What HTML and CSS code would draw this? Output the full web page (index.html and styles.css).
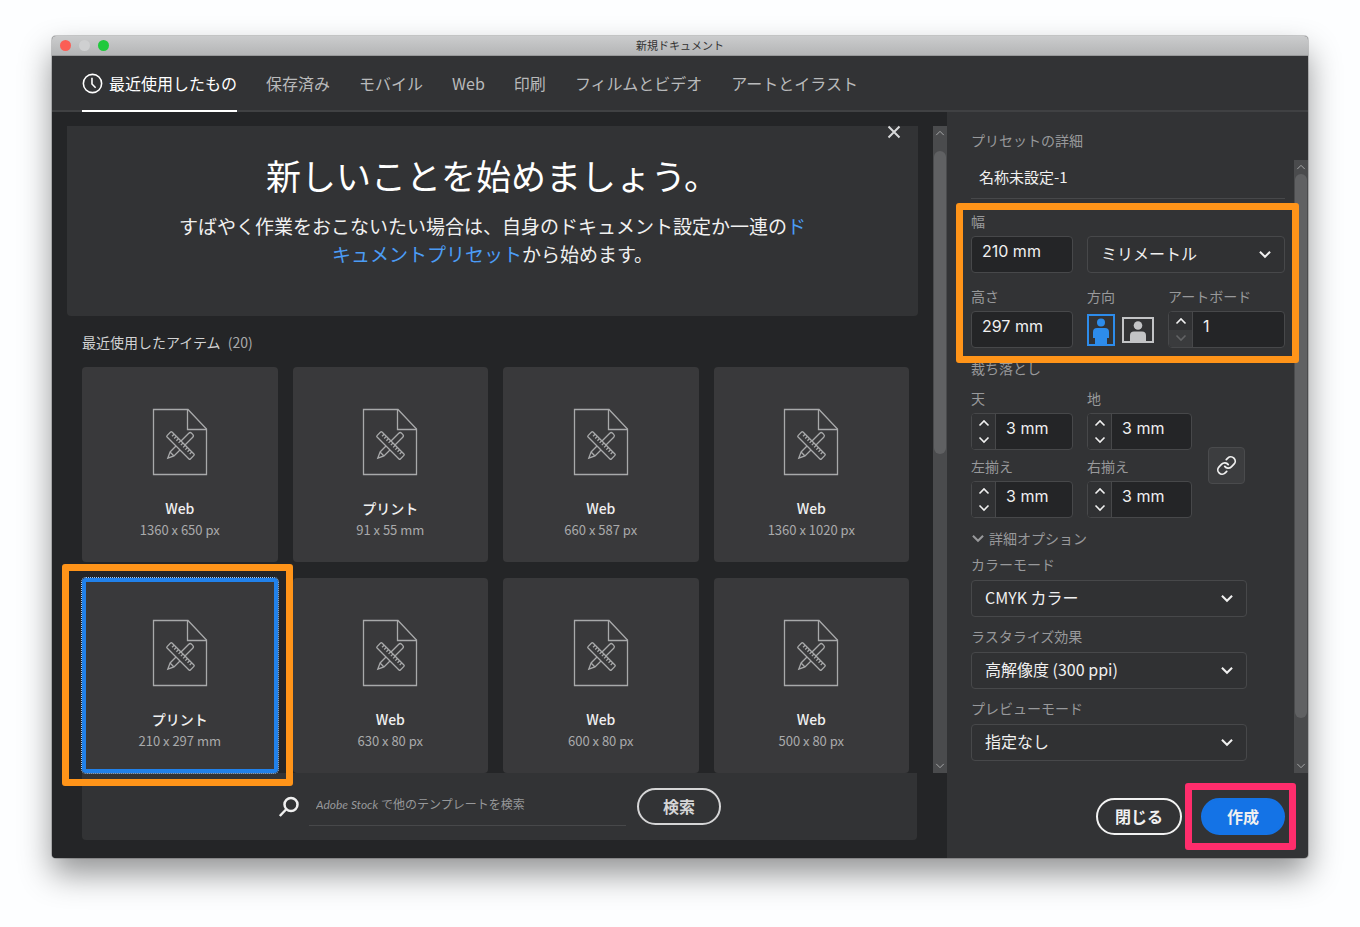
FILE: index.html
```html
<!DOCTYPE html>
<html lang="ja">
<head>
<meta charset="utf-8">
<meta name="viewport" content="width=device-width, initial-scale=1">
<title>新規ドキュメント</title>
<link rel="stylesheet" href="styles.css">
</head>
<body>
<svg class="defs" aria-hidden="true">
  <symbol id="doc" viewBox="0 0 56 68">
    <path d="M1.500 1.500H36L54.500 21V66.500H1.500Z"/>
    <path d="M35.500 1.500V21.500H54.500"/>
    <g transform="translate(28.500 37.500) rotate(-45)">
      <path d="M-12 -2.800H14.500a2 2 0 0 1 2 2v1.600a2 2 0 0 1 -2 2H-12L-18 0ZM-12 -2.800V2.800"/>
    </g>
    <g transform="translate(28.500 37.500) rotate(45)">
      <rect class="ruler" x="-16.500" y="-3.500" width="33" height="7" rx="1"/>
      <path d="M-12.500 -3.500v3M-9.400 -3.500v3M-6.300 -3.500v3M-3.200 -3.500v3M0 -3.500v3M3.200 -3.500v3M6.300 -3.500v3M9.400 -3.500v3M12.500 -3.500v3"/>
    </g>
  </symbol>
  <symbol id="down" viewBox="0 0 12 8"><path d="M1.500 1.500L6 6L10.500 1.500"/></symbol>
  <symbol id="up" viewBox="0 0 12 8"><path d="M1.500 6.500L6 2L10.500 6.500"/></symbol>
</svg>

<div class="window">
  <header class="titlebar">
    <div class="lights"><i class="light red"></i><i class="light gray"></i><i class="light green"></i></div>
    <h1 class="window-title">新規ドキュメント</h1>
    <div class="lights-spacer"></div>
  </header>

  <nav class="tabs">
    <a class="tab active" href="#recent"><svg class="clock" viewBox="0 0 20 20" aria-hidden="true"><circle cx="10" cy="10" r="8.700"/><path d="M9.500 4.500V10.500L13 14"/></svg>最近使用したもの</a>
    <a class="tab" href="#saved">保存済み</a>
    <a class="tab" href="#mobile">モバイル</a>
    <a class="tab" href="#web">Web</a>
    <a class="tab" href="#print">印刷</a>
    <a class="tab" href="#film">フィルムとビデオ</a>
    <a class="tab" href="#art">アートとイラスト</a>
  </nav>

  <div class="body">
    <main class="browser">
      <div class="scroller">
        <div class="content">
          <section class="banner">
            <button class="close" aria-label="閉じる"><svg viewBox="0 0 14 14"><path d="M1.500 1.500L12.500 12.500M12.500 1.500L1.500 12.500"/></svg></button>
            <h2 class="banner-title">新しいことを始めましょう。</h2>
            <p class="banner-text">すばやく作業をおこないたい場合は、自身のドキュメント設定か一連の<a href="#presets">ドキュメントプリセット</a>から始めます。</p>
          </section>
          <section class="recent">
            <h3 class="recent-title">最近使用したアイテム <span class="count">(20)</span></h3>
            <div class="cards">
              <button class="card"><svg class="doc"><use href="#doc"/></svg><span class="name">Web</span><span class="size">1360 x 650 px</span></button>
              <button class="card"><svg class="doc"><use href="#doc"/></svg><span class="name">プリント</span><span class="size">91 x 55 mm</span></button>
              <button class="card"><svg class="doc"><use href="#doc"/></svg><span class="name">Web</span><span class="size">660 x 587 px</span></button>
              <button class="card"><svg class="doc"><use href="#doc"/></svg><span class="name">Web</span><span class="size">1360 x 1020 px</span></button>
              <div class="marked">
                <button class="card selected"><svg class="doc"><use href="#doc"/></svg><span class="name">プリント</span><span class="size">210 x 297 mm</span></button>
                <span class="mark mark-card"></span>
              </div>
              <button class="card"><svg class="doc"><use href="#doc"/></svg><span class="name">Web</span><span class="size">630 x 80 px</span></button>
              <button class="card"><svg class="doc"><use href="#doc"/></svg><span class="name">Web</span><span class="size">600 x 80 px</span></button>
              <button class="card"><svg class="doc"><use href="#doc"/></svg><span class="name">Web</span><span class="size">500 x 80 px</span></button>
            </div>
          </section>
        </div>
        <div class="scrollbar" aria-hidden="true">
          <svg class="arrow"><use href="#up"/></svg>
          <div class="rail"><div class="thumb thumb-half"></div></div>
          <svg class="arrow"><use href="#down"/></svg>
        </div>
      </div>
      <form class="search">
        <svg class="lens" viewBox="0 0 22 22" aria-hidden="true"><circle cx="13" cy="8.500" r="6.500"/><path d="M8 13.500L1.800 20"/></svg>
        <input class="search-input" type="text" aria-label="テンプレートを検索" placeholder="Adobe Stock で他のテンプレートを検索">
        <button class="pill search-button" type="button">検索</button>
      </form>
    </main>

    <aside class="panel">
      <h2 class="label panel-title">プリセットの詳細</h2>
      <div class="scroller">
        <form class="details">
          <input class="doc-name" type="text" value="名称未設定-1" aria-label="名称">

          <div class="dimensions">
            <label class="label" for="width">幅</label>
            <div class="row">
              <input class="box col-a" id="width" type="text" value="210 mm">
              <div class="select grow"><select aria-label="単位"><option>ミリメートル</option></select><svg><use href="#down"/></svg></div>
            </div>
            <div class="row second">
              <div class="col-a">
                <label class="label" for="height">高さ</label>
                <input class="box" id="height" type="text" value="297 mm">
              </div>
              <div class="orientation">
                <span class="label">方向</span>
                <div class="orients">
                  <button class="orient on" type="button" aria-label="縦向き"><svg width="28" height="32" viewBox="0 0 28 32"><rect class="frame" x="1" y="1" width="26" height="30"/><circle cx="14" cy="8.500" r="4"/><path d="M10 14h8a4 4 0 0 1 4 4v6h-2v7H8v-7H6v-6a4 4 0 0 1 4-4Z"/></svg></button>
                  <button class="orient" type="button" aria-label="横向き"><svg width="32" height="26" viewBox="0 0 32 26"><rect class="frame" x="1" y="1" width="30" height="24"/><circle cx="16" cy="8.500" r="4.300"/><path d="M12 14.500h8a4 4 0 0 1 4 4V25H8v-6.500a4 4 0 0 1 4-4Z"/></svg></button>
                </div>
              </div>
              <div class="grow">
                <label class="label" for="artboards">アートボード</label>
                <div class="stepper">
                  <div class="steps"><button type="button" aria-label="増やす"><svg><use href="#up"/></svg></button><button type="button" class="off" disabled aria-label="減らす"><svg><use href="#down"/></svg></button></div>
                  <input id="artboards" type="text" value="1">
                </div>
              </div>
            </div>
            <span class="mark mark-dimensions"></span>
          </div>

          <span class="label bleed-title">裁ち落とし</span>
          <div class="bleed">
            <div class="bleed-grid">
              <div>
                <label class="label" for="top">天</label>
                <div class="stepper"><div class="steps"><button type="button" aria-label="増やす"><svg><use href="#up"/></svg></button><button type="button" aria-label="減らす"><svg><use href="#down"/></svg></button></div><input id="top" type="text" value="3 mm"></div>
              </div>
              <div>
                <label class="label" for="bottom">地</label>
                <div class="stepper"><div class="steps"><button type="button" aria-label="増やす"><svg><use href="#up"/></svg></button><button type="button" aria-label="減らす"><svg><use href="#down"/></svg></button></div><input id="bottom" type="text" value="3 mm"></div>
              </div>
              <div>
                <label class="label" for="left">左揃え</label>
                <div class="stepper"><div class="steps"><button type="button" aria-label="増やす"><svg><use href="#up"/></svg></button><button type="button" aria-label="減らす"><svg><use href="#down"/></svg></button></div><input id="left" type="text" value="3 mm"></div>
              </div>
              <div>
                <label class="label" for="right">右揃え</label>
                <div class="stepper"><div class="steps"><button type="button" aria-label="増やす"><svg><use href="#up"/></svg></button><button type="button" aria-label="減らす"><svg><use href="#down"/></svg></button></div><input id="right" type="text" value="3 mm"></div>
              </div>
            </div>
            <button class="link" type="button" aria-label="リンク"><svg viewBox="0 0 24 24"><path d="M10 13a5 5 0 0 0 7.540.540l3-3a5 5 0 0 0-7.070-7.070l-1.720 1.710"/><path d="M14 11a5 5 0 0 0-7.540-.540l-3 3a5 5 0 0 0 7.070 7.070l1.710-1.710"/></svg></button>
          </div>

          <button class="label advanced" type="button"><svg><use href="#down"/></svg>詳細オプション</button>

          <div class="option">
            <label class="label" for="color">カラーモード</label>
            <div class="select"><select id="color"><option>CMYK カラー</option></select><svg><use href="#down"/></svg></div>
          </div>
          <div class="option">
            <label class="label" for="raster">ラスタライズ効果</label>
            <div class="select"><select id="raster"><option>高解像度 (300 ppi)</option></select><svg><use href="#down"/></svg></div>
          </div>
          <div class="option">
            <label class="label" for="preview">プレビューモード</label>
            <div class="select"><select id="preview"><option>指定なし</option></select><svg><use href="#down"/></svg></div>
          </div>
        </form>
        <div class="scrollbar" aria-hidden="true">
          <svg class="arrow"><use href="#up"/></svg>
          <div class="rail"><div class="thumb thumb-long"></div></div>
          <svg class="arrow"><use href="#down"/></svg>
        </div>
      </div>
      <footer class="actions">
        <button class="pill dismiss">閉じる</button>
        <div class="marked">
          <button class="pill create">作成</button>
          <span class="mark mark-create"></span>
        </div>
      </footer>
    </aside>
  </div>
</div>
</body>
</html>
```
FILE: styles.css
```css
* { box-sizing: border-box; }

body {
  margin: 0;
  padding: 36px 52px 69px;
  background: #fdfeff;
  font-family: "Noto Sans CJK JP", sans-serif;
  font-size: 16px;
  color: #f0f0f0;
}

button, input, select {
  margin: 0;
  padding: 0;
  border: 0;
  border-radius: 0;
  background: none;
  color: inherit;
  font: inherit;
  outline: 0;
}

h1, h2, h3, p { margin: 0; font-weight: 400; }

svg { display: block; fill: none; stroke: currentColor; }

.defs { position: absolute; width: 0; height: 0; }

.window {
  border-radius: 4px;
  background: #323335;
  box-shadow: 0 0 0 1px rgba(0, 0, 0, .18), 0 16px 32px rgba(0, 0, 0, .42);
}

/* Title bar */
.titlebar {
  display: flex;
  align-items: center;
  height: 20px;
  padding: 0 8px;
  border-radius: 4px 4px 0 0;
  background: linear-gradient(#cbcccd, #b4b5b6);
  border-bottom: 1px solid #98999a;
}
.lights { display: flex; flex: 1; gap: 8px; }
.lights-spacer { flex: 1; }
.light { width: 11px; height: 11px; border-radius: 50%; }
.red { background: #fb5e55; }
.gray { background: #cfd0d1; }
.green { background: #1fc93c; }
.window-title { font-size: 11px; line-height: 16px; padding-bottom: 2px; color: #333; }

/* Category tabs */
.tabs {
  display: flex;
  gap: 29px;
  padding: 0 30px;
  border-bottom: 2px solid #404143;
}
.tab {
  display: flex;
  align-items: center;
  gap: 6px;
  height: 56px;
  margin-bottom: -2px;
  border-bottom: 2px solid transparent;
  color: #b9babb;
  text-decoration: none;
  white-space: nowrap;
}
.tab.active { color: #fff; border-color: #fff; }
.clock { width: 21px; height: 21px; stroke-width: 1.5; }

.body { display: flex; }

/* Preset browser */
.browser {
  display: flex;
  flex: 1;
  flex-direction: column;
  min-width: 0;
  padding: 14px 0 18px 15px;
  border-radius: 0 0 0 4px;
  background: #242527;
}
.scroller { display: flex; flex: 1; }
.content { flex: 1; padding-right: 15px; }

.banner {
  position: relative;
  padding: 24px 0 48px;
  border-radius: 0 0 4px 4px;
  background: #323335;
  text-align: center;
}
.banner-title { font-size: 35px; line-height: 50px; color: #fff; }
.banner-text {
  max-width: 640px;
  margin: 12px auto 0;
  font-size: 19px;
  line-height: 28px;
}
.banner-text a { color: #4b9cf5; text-decoration: none; }
.close { position: absolute; top: -1px; right: 17px; color: #d8d9da; }
.close svg { width: 14px; height: 14px; stroke-width: 2; }

.recent { padding: 15px 9px 0 15px; }
.recent-title {
  margin-bottom: 14px;
  font-size: 14px;
  line-height: 22px;
  color: #d2d3d4;
}
.count { margin-left: 4px; color: #a9aaab; }
.cards {
  display: grid;
  grid-template-columns: repeat(4, 1fr);
  gap: 16px 15px;
}
.card {
  display: flex;
  flex-direction: column;
  align-items: center;
  width: 100%;
  min-height: 195px;
  padding: 41px 0 21px;
  border-radius: 4px;
  background: #39393b;
}
.doc { width: 56px; height: 68px; color: #a8a9aa; stroke-width: 1.3; }
.ruler { fill: #39393b; }
.name { margin-top: 21px; font-size: 14px; line-height: 22px; font-weight: 500; }
.size { font-size: 13px; line-height: 22px; color: #a9aaab; }
.selected {
  box-shadow: inset 0 0 0 4px #2181ea;
  outline: 1px dotted #9cc9fa;
}

/* Highlight frames */
.marked { position: relative; }
.mark {
  position: absolute;
  z-index: 2;
  border: 7px solid #ff9419;
  border-radius: 3px;
  pointer-events: none;
}
.mark-card { inset: -14px -15px -13px -20px; }
.mark-dimensions { inset: -8px -14px -15px -15px; }
.mark-create { inset: -15px -11px -15px -16px; border-color: #ff2d6c; }

.scrollbar {
  display: flex;
  flex-direction: column;
  width: 14px;
  background: #4a4b4d;
}
.arrow { width: 10px; height: 14px; margin: 0 auto; color: #b5b6b7; }
.rail { flex: 1; padding: 0 1px; }
.thumb { border-radius: 6px; background: #606163; }
.thumb-half { height: 49%; margin-top: 11px; }
.thumb-long { height: 93%; }

.search {
  display: flex;
  align-items: center;
  justify-content: center;
  min-height: 67px;
  margin: 0 30px 0 15px;
  border-radius: 0 0 4px 4px;
  background: #323335;
}
.lens { width: 22px; height: 22px; margin-right: 9px; stroke-width: 2.5; }
.search-input {
  width: 317px;
  height: 38px;
  margin-right: 11px;
  padding: 0 7px 6px;
  border-bottom: 1px solid #47484a;
  font-size: 12px;
}
.search-input::placeholder {
  color: #97989a;
  font-family: Lato, "Noto Sans CJK JP", sans-serif;
  font-style: italic;
  font-synthesis: none;
}
.pill {
  height: 37px;
  padding-bottom: 2px;
  border: 2px solid #f2f2f2;
  border-radius: 19px;
  font-weight: 700;
  line-height: 24px;
}
.search-button { width: 84px; border-color: #d5d5d6; color: #d5d5d6; }

/* Details panel */
.panel {
  display: flex;
  flex-direction: column;
  width: 361px;
  padding-top: 18px;
}
.label {
  display: block;
  font-size: 14px;
  line-height: 20px;
  color: #98999b;
}
.panel-title { margin: 0 24px 10px; }
.details {
  flex: 1;
  min-width: 0;
  padding: 0 9px 12px 24px;
}
.doc-name {
  width: 100%;
  height: 39px;
  padding: 0 8px 6px;
  border-bottom: 1px solid #47484a;
  font-size: 15px;
}
.dimensions { position: relative; margin-top: 12px; }
.row { display: flex; gap: 14px; }
.dimensions > .row { margin-top: 5px; }
.dimensions > .second { margin-top: 13px; }
.col-a { width: 102px; }
.grow { flex: 1; min-width: 0; }

.box, .stepper {
  width: 102px;
  height: 37px;
  border: 1px solid #47484a;
  border-radius: 4px;
  background: #242527;
}
.box, .stepper input {
  padding: 0 10px 7px;
  font-family: Inter, sans-serif;
  font-size: 16px;
}
.label + .box, .label + .stepper { margin-top: 5px; }
.stepper { display: flex; width: 100%; overflow: hidden; }
.stepper input { flex: 1; min-width: 0; }
.steps {
  display: flex;
  flex-direction: column;
  width: 24px;
  border-right: 1px solid #47484a;
  background: #303133;
}
.steps button { flex: 1; display: grid; place-items: center; }
.steps svg { width: 12px; height: 8px; stroke-width: 1.6; }
.steps .off { background: #3a3b3d; color: #626365; }

.orients { display: flex; align-items: center; gap: 7px; height: 37px; margin-top: 5px; }
.orient { color: #c3c4c6; }
.orient.on { color: #2d8ceb; }
.orient svg { fill: currentColor; stroke: none; }
.orient .frame { fill: none; stroke: currentColor; stroke-width: 2; }

.select { display: grid; align-items: center; margin-top: 0; }
.select select, .select svg { grid-area: 1 / 1; }
.select select {
  width: 100%;
  height: 37px;
  padding: 0 32px 3px 13px;
  border: 1px solid #47484a;
  border-radius: 4px;
  background: #303133;
  appearance: none;
}
.select svg {
  justify-self: end;
  width: 14px;
  height: 9px;
  margin-right: 13px;
  stroke-width: 1.8;
  pointer-events: none;
}

.bleed-title { margin-top: 10px; }
.bleed { display: flex; align-items: center; gap: 16px; margin-top: 10px; }
.bleed-grid {
  display: grid;
  grid-template-columns: 102px 105px;
  gap: 6px 14px;
}
.link {
  display: grid;
  place-items: center;
  width: 37px;
  height: 37px;
  margin-top: 24px;
  border: 1px solid #4a4b4d;
  border-radius: 4px;
  background: #3c3d3f;
}
.link svg { width: 21px; height: 21px; stroke-width: 2; stroke-linecap: round; }

.advanced {
  display: flex;
  align-items: center;
  gap: 4px;
  margin-top: 10px;
}
.advanced svg { width: 14px; height: 9px; stroke-width: 1.8; }
.option { max-width: 276px; margin-top: 9px; }
.advanced + .option { margin-top: 6px; }
.option .select { margin-top: 6px; }

.actions {
  display: flex;
  justify-content: flex-end;
  gap: 19px;
  padding: 25px 23px 23px;
}
.dismiss { width: 86px; }
.create { width: 84px; border-color: #1473e6; background: #1473e6; }
```
